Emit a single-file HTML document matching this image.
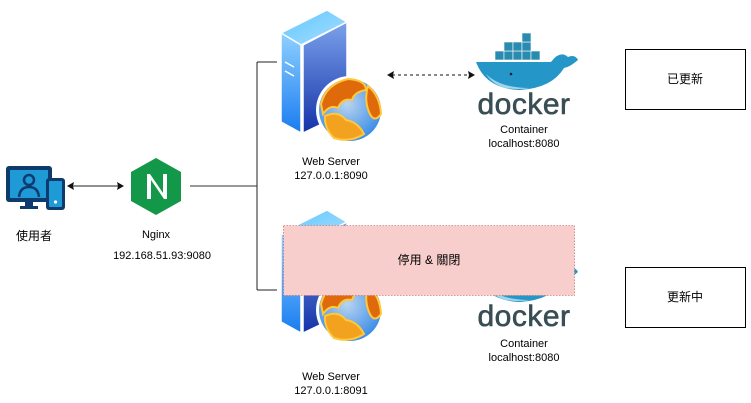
<!DOCTYPE html>
<html><head><meta charset="utf-8"><style>
html,body{margin:0;padding:0;background:#fff;}
svg{display:block;font-family:"Liberation Sans","Noto Sans CJK TC",sans-serif;}
</style></head><body>
<svg width="751" height="403" viewBox="0 0 751 403" xmlns="http://www.w3.org/2000/svg">
<defs>
<linearGradient id="top" x1="0" y1="0" x2="1" y2="1"><stop offset="0" stop-color="#5ec8ff"/><stop offset="1" stop-color="#a9ddff"/></linearGradient>
<linearGradient id="left" x1="0" y1="0" x2="0" y2="1"><stop offset="0" stop-color="#8fd0ff"/><stop offset="1" stop-color="#1a7cf0"/></linearGradient>
<linearGradient id="right" x1="0" y1="0" x2="0" y2="1"><stop offset="0" stop-color="#7ba2ec"/><stop offset="1" stop-color="#1533a8"/></linearGradient>
<radialGradient id="globe" cx="0.45" cy="0.4" r="0.6"><stop offset="0" stop-color="#b9d4ef"/><stop offset="1" stop-color="#3f8fe8"/></radialGradient>
<g id="server">
<polygon points="281,33 327,10 347,22 301,45" fill="url(#top)" stroke="#fff" stroke-width="1.5"/>
<polygon points="281,33 301,45 301,133 281,122" fill="url(#left)" stroke="#fff" stroke-width="1.5"/>
<polygon points="303,45 347,22 347,112 303,133" fill="url(#right)" stroke="#fff" stroke-width="1.5"/>
<line x1="285" y1="62" x2="294" y2="67" stroke="#fff" stroke-width="1.5"/>
<line x1="285" y1="71" x2="294" y2="76" stroke="#fff" stroke-width="1.5"/>
<circle cx="350" cy="110" r="34" fill="#fff"/>
<circle cx="350" cy="110" r="31" fill="url(#globe)"/>
<path d="M321,104 Q326,84 348,79 Q366,80 366,90 Q354,92 352,100 Q342,98 338,108 Q330,104 323,114 Z" fill="#df6a0c" stroke="#ffc83a" stroke-width="2"/>
<path d="M325,116 Q338,110 346,120 Q358,122 364,134 Q350,143 334,138 Q324,128 325,116 Z" fill="#f3a21f" stroke="#ffc83a" stroke-width="2"/>
<path d="M368,86 Q380,96 381,114 Q374,124 369,112 Q364,100 368,86 Z" fill="#df6a0c" stroke="#ffc83a" stroke-width="2"/>
</g>
<g id="docker">
<g fill="#2a8bb0" stroke="#fff" stroke-width="0.6">
<rect x="495" y="51" width="9" height="9"/><rect x="504" y="51" width="9" height="9"/><rect x="513" y="51" width="9" height="9"/><rect x="522" y="51" width="9" height="9"/><rect x="531" y="51" width="9" height="9"/>
<rect x="504" y="42" width="9" height="9"/><rect x="513" y="42" width="9" height="9"/><rect x="522" y="42" width="9" height="9"/>
<rect x="522" y="33" width="9" height="9"/>
</g>
<path d="M476,62 L551,62 Q560,50 568,57 Q575,54 578,60 Q570,67 564,68 Q552,88 520,90 Q486,89 476,62 Z" fill="#2496c8"/>
<path d="M486,74 Q500,88 530,88 Q520,90 505,88 Q492,84 486,74Z" fill="#9fd4ea"/>
<circle cx="511" cy="74" r="1.3" fill="#123"/>
<text x="524" y="114" text-anchor="middle" font-size="30" fill="#394d54" stroke="#394d54" stroke-width="0.6" letter-spacing="0.5">docker</text>
</g>
</defs>

<line x1="190" y1="186" x2="257" y2="186" stroke="#333"/>
<line x1="257" y1="62" x2="257" y2="290" stroke="#222"/>
<line x1="257" y1="62" x2="277" y2="62" stroke="#222"/>
<line x1="257" y1="290" x2="277" y2="290" stroke="#222"/>
<line x1="72" y1="186" x2="119" y2="186" stroke="#222"/>
<polygon points="67,186 74,182 73,186 74,190" fill="#111"/>
<polygon points="124,186 117,182 118,186 117,190" fill="#111"/>
<line x1="392" y1="75" x2="470" y2="75" stroke="#111" stroke-dasharray="3,3"/>
<polygon points="387,75 394,71 393,75 394,79" fill="#111"/>
<polygon points="475,75 468,71 469,75 468,79" fill="#111"/>

<rect x="6" y="166" width="46" height="36" rx="3" fill="#0e3a6e"/>
<rect x="10" y="170" width="38" height="28" fill="#1e9ad6"/>
<circle cx="29" cy="180" r="5" fill="none" stroke="#0e3a6e" stroke-width="2.5"/>
<path d="M19,197 Q20,187 29,187 Q38,187 39,197" fill="none" stroke="#0e3a6e" stroke-width="2.5"/>
<rect x="25" y="202" width="8" height="5" fill="#0e3a6e"/>
<rect x="20" y="206" width="18" height="3" fill="#0e3a6e"/>
<rect x="46" y="178" width="19" height="32" rx="3" fill="#0e3a6e"/>
<rect x="49" y="181" width="13" height="26" rx="1" fill="#1e9ad6"/>
<circle cx="55.5" cy="202" r="1.6" fill="#fff"/>
<text x="34" y="240" text-anchor="middle" font-size="12" fill="#000">使用者</text>

<polygon points="156,158 181,172 181,201 156,215 131,201 131,172" fill="#139748"/>
<path d="M147,199 V174 H150 L163,193 V174 H167 V199 H164 L151,180 V199 Z" fill="#fff"/>
<text x="156" y="238" text-anchor="middle" font-size="11" fill="#000">Nginx</text>
<text x="162" y="259" text-anchor="middle" font-size="11" fill="#000">192.168.51.93:9080</text>

<use href="#server"/>
<text x="331" y="165" text-anchor="middle" font-size="11" fill="#000">Web Server</text>
<text x="331" y="179" text-anchor="middle" font-size="11" fill="#000">127.0.0.1:8090</text>
<use href="#docker"/>
<text x="524" y="133" text-anchor="middle" font-size="11" fill="#000">Container</text>
<text x="524" y="147" text-anchor="middle" font-size="11" fill="#000">localhost:8080</text>

<use href="#server" transform="translate(0,200)"/>
<use href="#docker" transform="translate(0,212)"/>
<text x="331" y="380" text-anchor="middle" font-size="11" fill="#000">Web Server</text>
<text x="331" y="394" text-anchor="middle" font-size="11" fill="#000">127.0.0.1:8091</text>
<text x="524" y="347" text-anchor="middle" font-size="11" fill="#000">Container</text>
<text x="524" y="361" text-anchor="middle" font-size="11" fill="#000">localhost:8080</text>

<rect x="283.5" y="225.5" width="291" height="70" fill="#f8cecc" stroke="#b85450" stroke-width="0.6" stroke-dasharray="1.5,1.5"/>
<text x="429" y="264" text-anchor="middle" font-size="12" fill="#000">停用 &amp; 關閉</text>

<rect x="625.5" y="49.5" width="120" height="60" fill="#fff" stroke="#000"/>
<text x="685" y="83" text-anchor="middle" font-size="12" fill="#000">已更新</text>
<rect x="625.5" y="267.5" width="120" height="60" fill="#fff" stroke="#000"/>
<text x="685" y="301" text-anchor="middle" font-size="12" fill="#000">更新中</text>
</svg>
</body></html>
